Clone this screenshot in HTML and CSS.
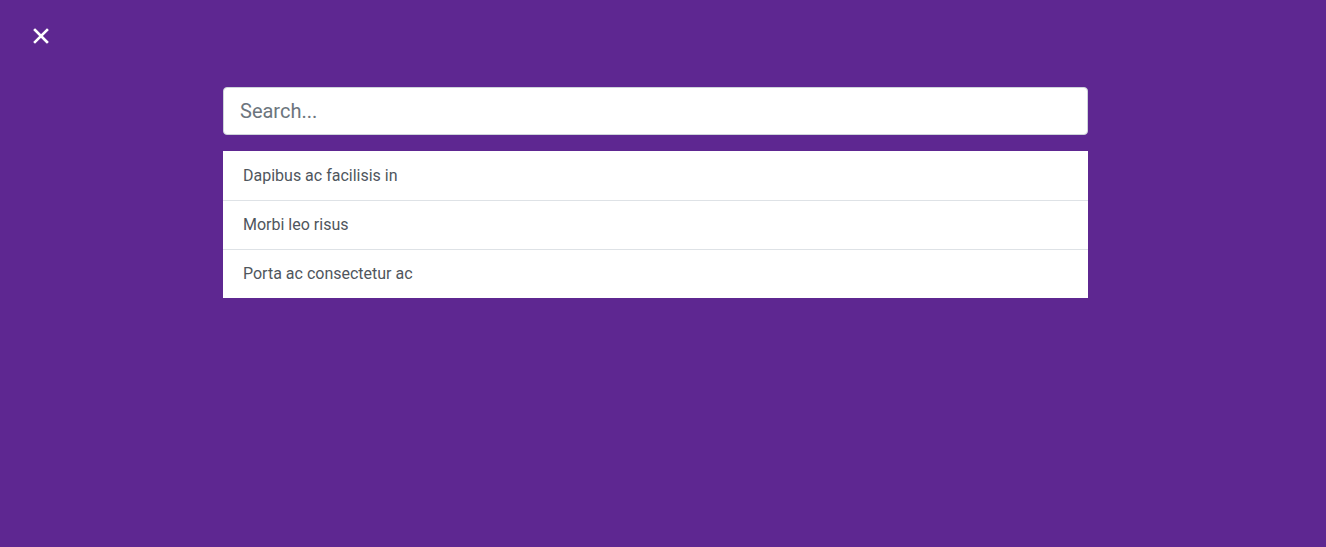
FILE: index.html
```html
<!DOCTYPE html>
<html>
<head>
<meta charset="utf-8">
<link rel="stylesheet" href="styles.css">
</head>
<body>
<div class="overlay">
  <button class="close" aria-label="Close">
    <svg width="16" height="16" viewBox="0 0 16 16"><path d="M2 2 L14 14 M14 2 L2 14" stroke="#fff" stroke-width="2.6" stroke-linecap="square"/></svg>
  </button>
  <div class="search-wrap">
    <input class="search" type="text" placeholder="Search...">
    <ul class="results">
      <li>Dapibus ac facilisis in</li>
      <li>Morbi leo risus</li>
      <li>Porta ac consectetur ac</li>
    </ul>
  </div>
</div>
</body>
</html>
```
FILE: styles.css
```css
html, body {
  margin: 0;
  padding: 0;
  height: 100%;
}
body {
  background: #5e2791;
  font-family: Roboto, "Liberation Sans", sans-serif;
}
.overlay {
  height: 100%;
  padding-top: 28px;
  box-sizing: border-box;
}
.close {
  display: block;
  margin-left: 33px;
  width: 16px;
  height: 16px;
  padding: 0;
  border: 0;
  background: none;
  cursor: pointer;
}
.close svg { display: block; }
.search-wrap {
  margin: 43px 238px 0 223px;
}
.search {
  display: block;
  width: 100%;
  box-sizing: border-box;
  height: 48px;
  padding: 0 16px;
  font-family: Roboto, "Liberation Sans", sans-serif;
  font-size: 20px;
  color: #495057;
  background: #fff;
  border: 1px solid #ced4da;
  border-radius: 4px;
  outline: none;
}
.search::placeholder { color: #6c757d; }
.results {
  list-style: none;
  margin: 16px 0 0;
  padding: 0;
  background: #fff;
}
.results li {
  height: 48px;
  line-height: 48px;
  padding: 0 20px;
  font-size: 16px;
  color: #4f565d;
  border-top: 1px solid #dee2e6;
}
.results li:first-child { border-top: 0; height: 49px; line-height: 50px; }
```
